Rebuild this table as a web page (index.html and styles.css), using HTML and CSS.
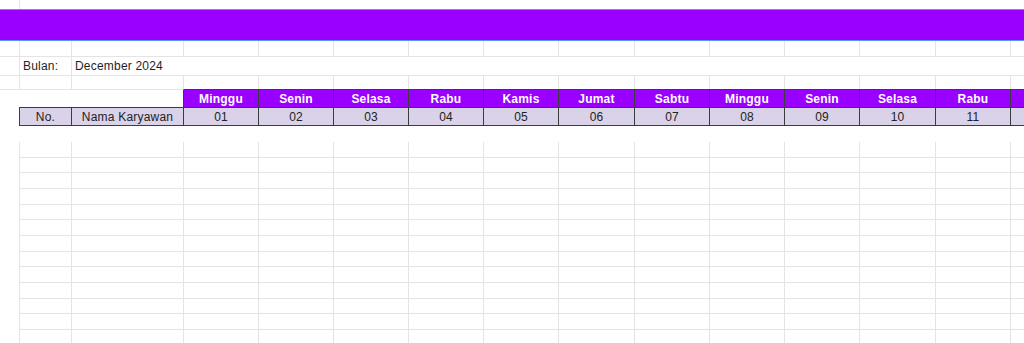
FILE: index.html
```html
<!DOCTYPE html>
<html lang="id">
<head>
<meta charset="utf-8">
<title>Absensi Karyawan</title>
<link rel="stylesheet" href="styles.css">
</head>
<body>
<div class="sheet">
  <div class="row h9">
    <div class="cell c0 g"></div>
  </div>

  <div class="band"></div>

  <div class="row h16 ln">
    <div class="cell c0 g"></div><div class="cell c1 g"></div><div class="cell c2 g"></div>
    <div class="cell d g"></div><div class="cell d g"></div><div class="cell d g"></div><div class="cell d g"></div><div class="cell d g"></div><div class="cell d wide g"></div>
    <div class="cell d g"></div><div class="cell d g"></div><div class="cell d g"></div><div class="cell d wide g"></div><div class="cell d g"></div><div class="cell d g"></div>
  </div>

  <div class="row h19 ln">
    <div class="cell c0 g"></div>
    <div class="cell c1 g txt">Bulan:</div>
    <div class="cell c2 txt wide-text">December 2024</div>
  </div>

  <div class="row h13">
    <div class="cell c0 g"></div><div class="cell c1 g"></div><div class="cell c2 g"></div>
    <div class="cell d g"></div><div class="cell d g"></div><div class="cell d g"></div><div class="cell d g"></div><div class="cell d g"></div><div class="cell d wide g"></div>
    <div class="cell d g"></div><div class="cell d g"></div><div class="cell d g"></div><div class="cell d wide g"></div><div class="cell d g"></div><div class="cell d g"></div>
  </div>

  <div class="row h18 head">
    <div class="cell c0 blank"></div><div class="cell c1 blank"></div><div class="cell c2 blank edge"></div>
    <div class="cell d day">Minggu</div>
    <div class="cell d day">Senin</div>
    <div class="cell d day">Selasa</div>
    <div class="cell d day">Rabu</div>
    <div class="cell d day">Kamis</div>
    <div class="cell d wide day">Jumat</div>
    <div class="cell d day">Sabtu</div>
    <div class="cell d day">Minggu</div>
    <div class="cell d day">Senin</div>
    <div class="cell d wide day">Selasa</div>
    <div class="cell d day">Rabu</div>
    <div class="cell d day"></div>
  </div>

  <div class="row h19 sub">
    <div class="cell c0 edge"></div>
    <div class="cell c1 lbl">No.</div>
    <div class="cell c2 lbl">Nama Karyawan</div>
    <div class="cell d lbl">01</div>
    <div class="cell d lbl">02</div>
    <div class="cell d lbl">03</div>
    <div class="cell d lbl">04</div>
    <div class="cell d lbl">05</div>
    <div class="cell d wide lbl">06</div>
    <div class="cell d lbl">07</div>
    <div class="cell d lbl">08</div>
    <div class="cell d lbl">09</div>
    <div class="cell d wide lbl">10</div>
    <div class="cell d lbl">11</div>
    <div class="cell d lbl"></div>
  </div>

  <div class="row h16"></div>

  <div class="grid">
    <div class="row h16 body"><div class="cell c0 g"></div><div class="cell c1 g"></div><div class="cell c2 g"></div><div class="cell d g"></div><div class="cell d g"></div><div class="cell d g"></div><div class="cell d g"></div><div class="cell d g"></div><div class="cell d wide g"></div><div class="cell d g"></div><div class="cell d g"></div><div class="cell d g"></div><div class="cell d wide g"></div><div class="cell d g"></div><div class="cell d g"></div></div>
    <div class="row h15 body"><div class="cell c0 g"></div><div class="cell c1 g"></div><div class="cell c2 g"></div><div class="cell d g"></div><div class="cell d g"></div><div class="cell d g"></div><div class="cell d g"></div><div class="cell d g"></div><div class="cell d wide g"></div><div class="cell d g"></div><div class="cell d g"></div><div class="cell d g"></div><div class="cell d wide g"></div><div class="cell d g"></div><div class="cell d g"></div></div>
    <div class="row h16 body"><div class="cell c0 g"></div><div class="cell c1 g"></div><div class="cell c2 g"></div><div class="cell d g"></div><div class="cell d g"></div><div class="cell d g"></div><div class="cell d g"></div><div class="cell d g"></div><div class="cell d wide g"></div><div class="cell d g"></div><div class="cell d g"></div><div class="cell d g"></div><div class="cell d wide g"></div><div class="cell d g"></div><div class="cell d g"></div></div>
    <div class="row h16 body"><div class="cell c0 g"></div><div class="cell c1 g"></div><div class="cell c2 g"></div><div class="cell d g"></div><div class="cell d g"></div><div class="cell d g"></div><div class="cell d g"></div><div class="cell d g"></div><div class="cell d wide g"></div><div class="cell d g"></div><div class="cell d g"></div><div class="cell d g"></div><div class="cell d wide g"></div><div class="cell d g"></div><div class="cell d g"></div></div>
    <div class="row h15 body"><div class="cell c0 g"></div><div class="cell c1 g"></div><div class="cell c2 g"></div><div class="cell d g"></div><div class="cell d g"></div><div class="cell d g"></div><div class="cell d g"></div><div class="cell d g"></div><div class="cell d wide g"></div><div class="cell d g"></div><div class="cell d g"></div><div class="cell d g"></div><div class="cell d wide g"></div><div class="cell d g"></div><div class="cell d g"></div></div>
    <div class="row h16 body"><div class="cell c0 g"></div><div class="cell c1 g"></div><div class="cell c2 g"></div><div class="cell d g"></div><div class="cell d g"></div><div class="cell d g"></div><div class="cell d g"></div><div class="cell d g"></div><div class="cell d wide g"></div><div class="cell d g"></div><div class="cell d g"></div><div class="cell d g"></div><div class="cell d wide g"></div><div class="cell d g"></div><div class="cell d g"></div></div>
    <div class="row h16 body"><div class="cell c0 g"></div><div class="cell c1 g"></div><div class="cell c2 g"></div><div class="cell d g"></div><div class="cell d g"></div><div class="cell d g"></div><div class="cell d g"></div><div class="cell d g"></div><div class="cell d wide g"></div><div class="cell d g"></div><div class="cell d g"></div><div class="cell d g"></div><div class="cell d wide g"></div><div class="cell d g"></div><div class="cell d g"></div></div>
    <div class="row h15 body"><div class="cell c0 g"></div><div class="cell c1 g"></div><div class="cell c2 g"></div><div class="cell d g"></div><div class="cell d g"></div><div class="cell d g"></div><div class="cell d g"></div><div class="cell d g"></div><div class="cell d wide g"></div><div class="cell d g"></div><div class="cell d g"></div><div class="cell d g"></div><div class="cell d wide g"></div><div class="cell d g"></div><div class="cell d g"></div></div>
    <div class="row h16 body"><div class="cell c0 g"></div><div class="cell c1 g"></div><div class="cell c2 g"></div><div class="cell d g"></div><div class="cell d g"></div><div class="cell d g"></div><div class="cell d g"></div><div class="cell d g"></div><div class="cell d wide g"></div><div class="cell d g"></div><div class="cell d g"></div><div class="cell d g"></div><div class="cell d wide g"></div><div class="cell d g"></div><div class="cell d g"></div></div>
    <div class="row h16 body"><div class="cell c0 g"></div><div class="cell c1 g"></div><div class="cell c2 g"></div><div class="cell d g"></div><div class="cell d g"></div><div class="cell d g"></div><div class="cell d g"></div><div class="cell d g"></div><div class="cell d wide g"></div><div class="cell d g"></div><div class="cell d g"></div><div class="cell d g"></div><div class="cell d wide g"></div><div class="cell d g"></div><div class="cell d g"></div></div>
    <div class="row h15 body"><div class="cell c0 g"></div><div class="cell c1 g"></div><div class="cell c2 g"></div><div class="cell d g"></div><div class="cell d g"></div><div class="cell d g"></div><div class="cell d g"></div><div class="cell d g"></div><div class="cell d wide g"></div><div class="cell d g"></div><div class="cell d g"></div><div class="cell d g"></div><div class="cell d wide g"></div><div class="cell d g"></div><div class="cell d g"></div></div>
    <div class="row h16 body"><div class="cell c0 g"></div><div class="cell c1 g"></div><div class="cell c2 g"></div><div class="cell d g"></div><div class="cell d g"></div><div class="cell d g"></div><div class="cell d g"></div><div class="cell d g"></div><div class="cell d wide g"></div><div class="cell d g"></div><div class="cell d g"></div><div class="cell d g"></div><div class="cell d wide g"></div><div class="cell d g"></div><div class="cell d g"></div></div>
    <div class="row h16 body"><div class="cell c0 g"></div><div class="cell c1 g"></div><div class="cell c2 g"></div><div class="cell d g"></div><div class="cell d g"></div><div class="cell d g"></div><div class="cell d g"></div><div class="cell d g"></div><div class="cell d wide g"></div><div class="cell d g"></div><div class="cell d g"></div><div class="cell d g"></div><div class="cell d wide g"></div><div class="cell d g"></div><div class="cell d g"></div></div>
  </div>
</div>
</body>
</html>
```

FILE: styles.css
```css
html, body {
  margin: 0;
  padding: 0;
  overflow: hidden;
  background: #ffffff;
}

body {
  width: 1024px;
  height: 343px;
  font-family: "Liberation Sans", Arial, sans-serif;
  font-size: 12px;
  letter-spacing: 0.2px;
  color: #222222;
}

.sheet {
  display: flex;
  flex-direction: column;
  width: 1024px;
}

.row {
  display: flex;
  box-sizing: border-box;
  flex: none;
  width: 1024px;
}

.h9 { height: 9px; }
.h13 { height: 13px; }
.h15 { height: 15px; }
.h16 { height: 16px; }
.h18 { height: 18px; }
.h19 { height: 19px; }

.ln { border-bottom: 1px solid #e4e4e4; }

.cell {
  flex: none;
  box-sizing: border-box;
}

.c0 { width: 20px; }
.c1 { width: 52px; }
.c2 { width: 112px; }
.d { width: 75px; }
.d.wide { width: 76px; }

.g { border-right: 1px solid #e4e4e4; }

/* body grid: horizontal lines start right of the first narrow column */
.body .cell { border-bottom: 1px solid #e4e4e4; }
.body .c0 { border-bottom: none; }

.band {
  flex: none;
  box-sizing: border-box;
  height: 32px;
  background: #9900ff;
  border-top: 1px solid #5b93f2;
  border-bottom: 1px solid #5b93f2;
}

.txt {
  display: flex;
  align-items: center;
  padding-left: 3px;
  padding-bottom: 1px;
  white-space: nowrap;
  color: #1f1f1f;
}

.wide-text { width: auto; }

.head .blank { border-top: 1px solid #e4e4e4; }
.head .edge { border-right: 1px solid #3c3c3c; }

.head .day {
  display: flex;
  align-items: center;
  justify-content: center;
  background: #9900ff;
  color: #ffffff;
  font-weight: bold;
  border-top: 1px solid #3c3c3c;
  border-right: 1px solid #3c3c3c;
}

.sub .edge { border-right: 1px solid #3c3c3c; }

.sub .lbl {
  display: flex;
  align-items: center;
  justify-content: center;
  background: #d9d2e9;
  color: #222222;
  border-top: 1px solid #3c3c3c;
  border-bottom: 1px solid #3c3c3c;
  border-right: 1px solid #3c3c3c;
  white-space: nowrap;
}

.grid {
  display: flex;
  flex-direction: column;
}
```
